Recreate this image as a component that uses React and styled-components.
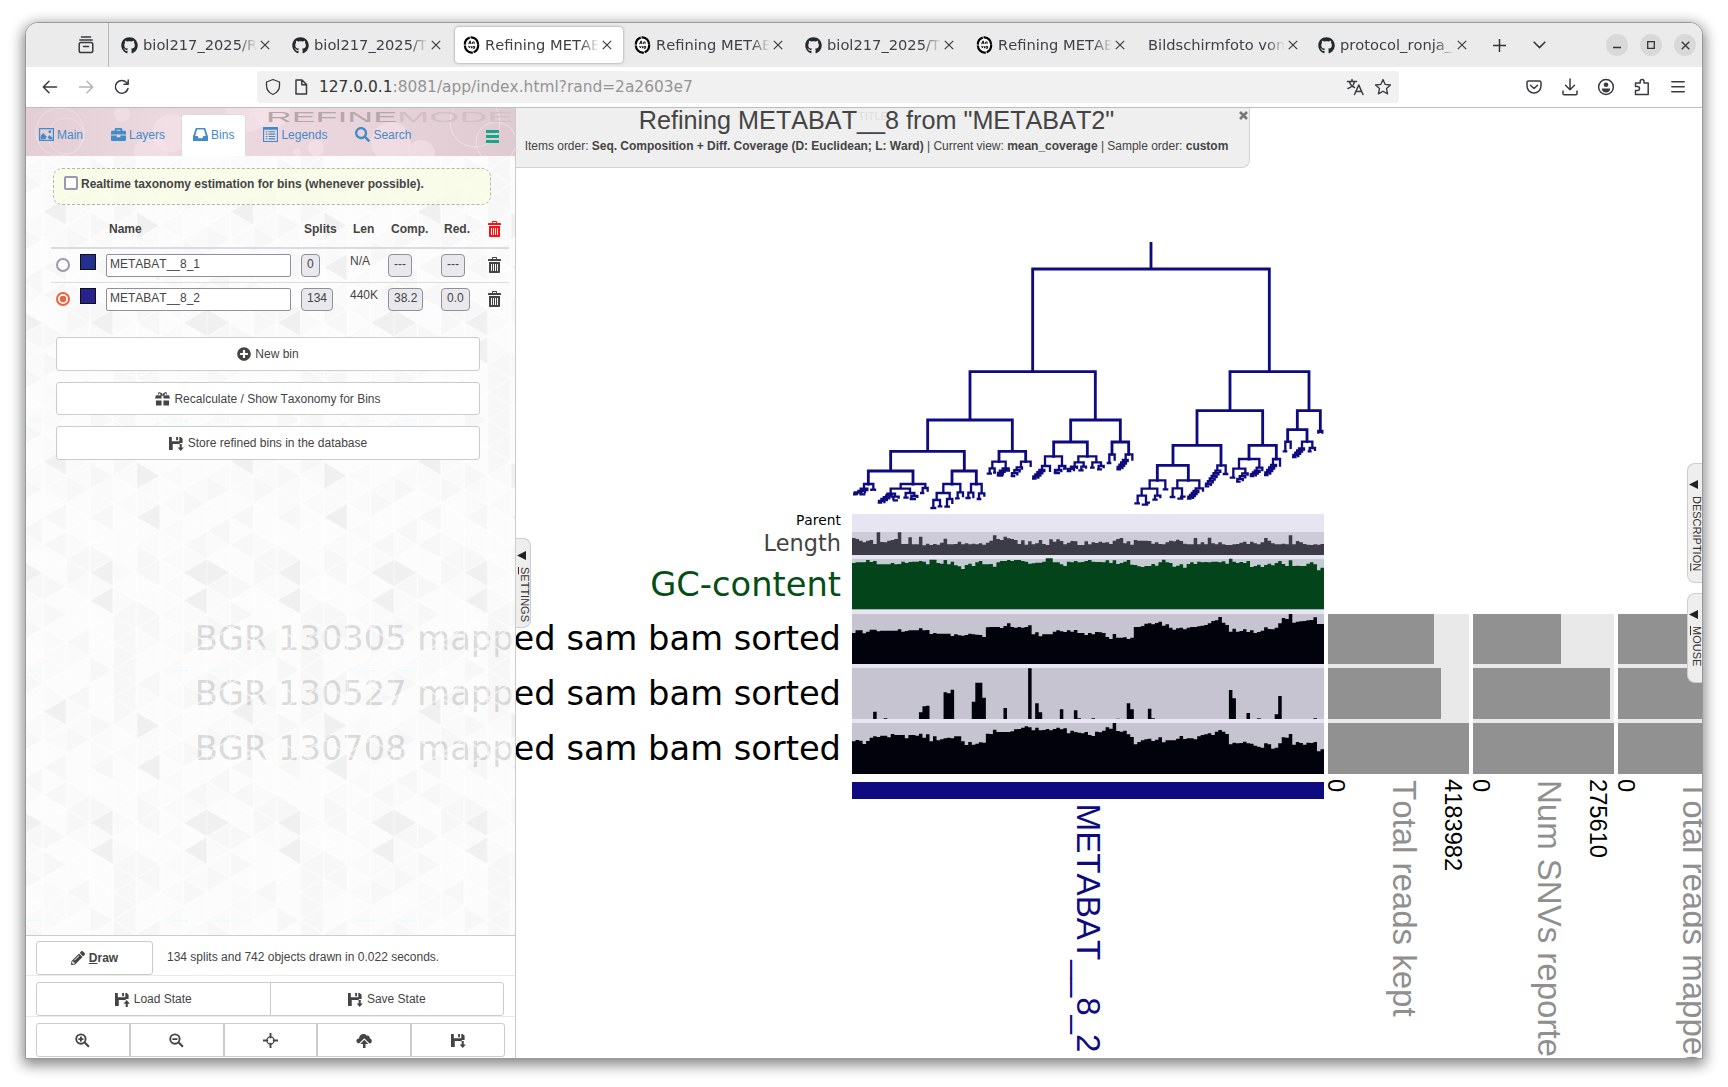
import React from 'react';
import styled, { createGlobalStyle } from 'styled-components';
import { FaGithub, FaPencilAlt, FaSearch, FaBriefcase, FaPlusCircle } from 'react-icons/fa';
import { ImBin } from 'react-icons/im';

const Global = createGlobalStyle`
  html, body { margin: 0; padding: 0; background: #fff; }
  body { font-family: "Liberation Sans", Arial, sans-serif; font-size: 12px; color: #444; overflow: hidden; font-kerning: none; }
  * { box-sizing: border-box; }
  svg { display: block; flex: none; }
`;

const Page = styled.div`
  width: 1728px;
  height: 1087px;
  padding: 22px 25px 28px 25px;
  background: #fff;
`;

const BrowserWindow = styled.div`
  width: 1678px;
  height: 1037px;
  border: 1px solid #9a9a9a;
  border-radius: 13px 13px 0 0;
  overflow: hidden;
  display: flex;
  flex-direction: column;
  background: #fff;
  box-shadow: 0 4px 14px 2px rgba(0, 0, 0, 0.48);
`;

const TabStrip = styled.div`
  height: 44px;
  flex: none;
  background: #ebebeb;
  display: flex;
  align-items: center;
  font-family: "DejaVu Sans", sans-serif;
  font-size: 14.67px;
  color: #3f3f46;
`;

const TabOverview = styled.div`
  width: 83px;
  height: 44px;
  padding-left: 51px;
  display: flex;
  align-items: center;
  border-right: 1px solid #b9b9b9;
  margin-right: 4px;
`;

const TabBox = styled.div`
  width: 168px;
  height: 36px;
  margin-right: 3px;
  padding-left: 8px;
  display: flex;
  align-items: center;
  border-radius: 4px;
  background: ${(p) => (p.$active ? '#fff' : 'transparent')};
  box-shadow: ${(p) => (p.$active ? '0 0 3px rgba(0,0,0,.4)' : 'none')};
`;

const TabLabel = styled.div`
  width: ${(p) => (p.$wide ? 137 : 114)}px;
  margin-left: ${(p) => (p.$wide ? 1 : 5)}px;
  white-space: nowrap;
  overflow: hidden;
  line-height: 20px;
  mask-image: linear-gradient(to right, #000 calc(100% - 18px), transparent 100%);
`;

const StripIcon = styled.div`
  width: ${(p) => p.$w}px;
  display: flex;
  justify-content: center;
`;

const WindowButtons = styled.div`
  display: flex;
  gap: 12px;
  margin-left: auto;
  margin-right: 6px;
`;

const RoundButton = styled.div`
  width: 22px;
  height: 22px;
  border-radius: 50%;
  background: #d9d9d9;
  display: flex;
  align-items: center;
  justify-content: center;
`;

const Toolbar = styled.div`
  height: 41px;
  flex: none;
  display: flex;
  align-items: center;
  background: #fff;
  border-bottom: 1px solid #bdbdbd;
  padding-left: 15px;
`;

const NavButtons = styled.div`
  width: 216px;
  display: flex;
  gap: 18px;
`;

const UrlField = styled.div`
  width: 1142px;
  height: 32px;
  border-radius: 4px;
  background: #f1f1f1;
  display: flex;
  align-items: center;
  padding: 0 7px;
  font-family: "DejaVu Sans", sans-serif;
  font-size: 15.42px;
  color: #949494;
  b { font-weight: normal; color: #333; }
`;

const UrlText = styled.div`
  flex: 1;
  margin-left: 9px;
  white-space: nowrap;
`;

const ToolbarActions = styled.div`
  display: flex;
  gap: 18px;
  margin-left: 126px;
`;

const Content = styled.div`
  position: relative;
  flex: 1;
  min-height: 0;
  display: flex;
  overflow: hidden;
`;

const Canvas = styled.svg`
  position: absolute;
  left: 0;
  top: 0;
`;

const Sidebar = styled.aside`
  position: relative;
  width: 490px;
  height: 950px;
  flex: none;
  display: flex;
  flex-direction: column;
  border-right: 1px solid #ccc;
  background: rgba(255, 255, 255, 0.87);
`;

const Backdrop = styled.svg`
  position: absolute;
  left: 0;
  top: 0;
  z-index: -1;
`;

const Header = styled.div`
  position: relative;
  z-index: 0;
  height: 48px;
  flex: none;
  display: flex;
  align-items: flex-end;
  gap: 4px;
  padding-left: 1px;
  border-bottom: 1px solid #dcd3d7;
`;

const NavItem = styled.div`
  height: 42px;
  margin-bottom: -1px;
  margin-left: ${(p) => p.$shift || 0}px;
  padding: 0 11px 2px;
  border: 1px solid ${(p) => (p.$active ? '#ddd' : 'transparent')};
  border-bottom: 0;
  border-radius: 4px 4px 0 0;
  background: ${(p) => (p.$active ? '#fff' : 'transparent')};
  color: #428bca;
  display: flex;
  align-items: center;
  gap: 3px;
  line-height: 16px;
`;

const MenuBars = styled.div`
  width: 13px;
  margin: 0 16px 12px auto;
  display: grid;
  gap: 2px;
  i { height: 3px; background: #18a689; }
`;

const Panel = styled.div`
  position: relative;
  z-index: 0;
  height: 779px;
  padding: 12px 0 0 25px;
  display: flex;
  flex-direction: column;
`;

const Notice = styled.label`
  margin-left: 2px;
  width: 438px;
  height: 37px;
  border: 1px dashed #b5b5a8;
  border-radius: 9px;
  background: rgba(250, 252, 226, 0.7);
  display: flex;
  padding: 7px 10px;
  gap: 3px;
  font-weight: bold;
  line-height: 16px;
`;

const Check = styled.span`
  width: 14px;
  height: 14px;
  border: 2px solid #9a99ab;
  border-radius: 2px;
  background: #fff;
`;

const Row = styled.div`
  display: grid;
  grid-template-columns: 29px 26px 195px 49px 38px 53px 46px 22px;
  width: 458px;
  height: ${(p) => (p.$head ? 44 : 34)}px;
  padding-top: ${(p) => (p.$head ? 16 : 5)}px;
  border-bottom: ${(p) => (p.$head ? '2px' : p.$last ? '0px' : '1px')} solid #dcdcdc;
  font-weight: ${(p) => (p.$head ? 'bold' : 'normal')};
  align-items: start;
  line-height: 16px;
`;

const HeadCell = styled.div`
  padding-left: 3px;
`;

const Radio = styled.div`
  width: 14px;
  height: 14px;
  margin: 4px 0 0 5px;
  border-radius: 50%;
  border: 2px solid ${(p) => (p.$on ? '#f0623a' : '#9a99ab')};
  background: ${(p) => (p.$on ? 'radial-gradient(circle, #f0623a 0 3px, #fff 3.6px)' : '#fff')};
`;

const Swatch = styled.div`
  width: 16px;
  height: 16px;
  border: 1px solid #111;
  background: ${(p) => p.$color};
`;

const NameInput = styled.div`
  width: 185px;
  height: 23px;
  border: 1px solid #8f8f9d;
  border-radius: 2px;
  background: #fff;
  padding: 1px 3px;
`;

const Pill = styled.div`
  justify-self: start;
  height: 23px;
  border: 1px solid #8f8f9d;
  border-radius: 4px;
  background: #e9e9ed;
  padding: 1px 5px;
`;

const Len = styled.div`
  margin-top: -1px;
`;

const BinIcon = styled.div`
  padding-top: ${(p) => (p.$head ? 0 : 3)}px;
  color: ${(p) => (p.$head ? '#f11' : '#444')};
`;

const Actions = styled.div`
  margin: 20px 0 0 5px;
  width: 424px;
  display: grid;
  gap: 11px;
`;

const Button = styled.div`
  height: ${(p) => p.$h || 34}px;
  width: ${(p) => (p.$w ? p.$w + 'px' : 'auto')};
  border: 1px solid #ccc;
  border-radius: 3px;
  background: #fff;
  display: flex;
  align-items: center;
  justify-content: center;
  gap: 4px;
  color: #444;
`;

const Footer = styled.div`
  position: relative;
  border-top: 1px solid #ccc;
  background: #fff;
  flex: 1;
  display: flex;
  flex-direction: column;
`;

const FootRow = styled.div`
  display: flex;
  height: ${(p) => p.$h}px;
  padding: ${(p) => p.$pt}px 0 0 10px;
  border-bottom: ${(p) => (p.$line ? '1px solid #eaeaea' : '0')};
  flex: none;
  align-items: flex-start;
`;

const Status = styled.div`
  margin: 9px 0 0 14px;
  line-height: 15px;
`;

const Joined = styled.div`
  display: flex;
  width: ${(p) => p.$w}px;
  height: 34px;
  border: 1px solid #ccc;
  border-radius: 3px;
  background: #fff;
`;

const Segment = styled.div`
  flex: 1;
  display: flex;
  align-items: center;
  justify-content: center;
  gap: 4px;
  border-left: ${(p) => p.$bar || 0}px solid #ccc;
  &:first-child { border-left: 0; }
`;

const TitlePanel = styled.div`
  position: relative;
  width: 734px;
  height: 60px;
  border: 1px solid #d3d3d3;
  border-top: 0;
  border-left: 0;
  border-radius: 0 0 8px 0;
  background: #efefef;
  text-align: center;
  padding-right: 12px;
  white-space: nowrap;
`;

const Title = styled.div`
  font-size: 25.2px;
  line-height: 28px;
  margin-top: -2px;
  position: relative;
`;

const SubTitle = styled.div`
  line-height: 16px;
  margin-top: 4px;
  letter-spacing: -0.02px;
`;

const GhostTitle = styled.div`
  position: absolute;
  left: 328px;
  top: 2px;
  font-size: 11px;
  line-height: 12px;
  color: #dedede;
`;

const CloseMark = styled.div`
  position: absolute;
  right: 1px;
  top: 3px;
`;

const SideTab = styled.div`
  position: absolute;
  ${(p) => (p.$left !== undefined ? `left: ${p.$left}px;` : 'right: 0;')}
  top: ${(p) => p.$top}px;
  width: 15px;
  height: ${(p) => p.$h}px;
  border: 1px solid #ccc;
  ${(p) => (p.$left !== undefined ? 'border-left: 0; border-radius: 0 8px 8px 0;' : 'border-right: 0; border-radius: 8px 0 0 8px;')}
  background: #eee;
  writing-mode: vertical-rl;
  color: #333;
  font-size: 11px;
  line-height: 11px;
  padding-top: ${(p) => p.$pad}px;
  white-space: nowrap;
  display: flex;
  align-items: flex-start;
  gap: 7px;
`;

const SideArrow = styled.svg`
  width: 9px;
  height: 9px;
  margin-right: 4px;
`;

/* ---------- icons ---------- */
const Close = ({ s = 10, w = 1.2 }) => (
  <svg width={s} height={s} viewBox="0 0 10 10" stroke="#3c3c40" strokeWidth={w} fill="none"><path d="M.8 .8 9.2 9.2M9.2 .8 .8 9.2" /></svg>
);

const Anvio = () => (
  <svg width="17" height="18" viewBox="0 0 16 18">
    <ellipse cx="8" cy="9" rx="6.700" ry="7.600" fill="#fff" stroke="#000" strokeWidth="2.200" strokeDasharray="9 .8 12 .9" />
    <path d="M5 8.200l1.600-3.400 1 3.200M5.500 7h2M9 7.800V6.200l1.600-.4V8M5 9.900l.9 2 .9-2M8 10.300v2M9.400 10.400h1.800v1.800H9.400z" fill="none" stroke="#000" strokeWidth=".9" />
  </svg>
);

const Line = ({ w = 18, children, sw = 1.5, color = '#3a3a3e' }) => (
  <svg width={w} height={w} viewBox="0 0 18 18" fill="none" stroke={color} strokeWidth={sw} strokeLinecap="round" strokeLinejoin="round">{children}</svg>
);

const Glyph = ({ s = 15, children, color = 'currentColor' }) => (
  <svg width={s} height={s} viewBox="0 0 16 16" fill={color}>{children}</svg>
);

const PictureIcon = () => (
  <Glyph><path fillRule="evenodd" d="M0 1h16v14H0zM1.300 2.300v11.400h13.400V2.300z" /><path d="M1.800 13V9.500L4.500 6.500l3 3 1.800 1.500 1.700-2.500 1.500 1.500 1.800 1V13h-3.500L8.500 10.500 6.500 13z" /><circle cx="11.500" cy="5" r="1.500" /></Glyph>
);
const InboxIcon = () => (
  <Glyph><path fillRule="evenodd" d="M3 1h10l3 9v5H0v-5zM4.300 2.600 2.400 9.600H5l1 2.400h4l1-2.400h2.600L11.700 2.600z" /></Glyph>
);
const ListIcon = () => (
  <Glyph><path fillRule="evenodd" d="M0 0h16v16H0zM1.200 3v11.800h13.600V3z" /><path d="M3 4.500h1.600v1.200H3zM3 7h1.600v1.200H3zM3 9.500h1.600v1.200H3zM3 12h1.600v1.200H3zM6 4.500h7v1.200H6zM6 7h7v1.200H6zM6 9.500h7v1.200H6zM6 12h7v1.200H6z" /></Glyph>
);
const Floppy = ({ up }) => (
  <Glyph>
    <path d="M0 1h3v4.500h8V1h1.500L14.500 3v4.500h-3v1.200L9.500 8.500H4V15H0z" />
    <path d="M7.600 1h2v3.400h-2z" />
    {up ? <path d="M12.500 8.500l3.300 4h-2.200V16h-2.200v-3.500H9.200z" /> : <path d="M11.400 8.500h2.200v3.700h2.200L12.500 16l-3.300-3.800h2.200z" />}
  </Glyph>
);
const GiftIcon = () => (
  <Glyph><path d="M1 4.500h4.500L3 3.500 4 1l3 1 1 2 1-2 3-1 1 2.500-2.500 1H15L16 8H9V5H7v3H0zM1 10h6v5.500H1zM9 10h6v5.500H9z" /><path d="M4.300 2.200 6.600 4.400H3.900zM11.700 2.200 9.400 4.400h2.700z" fill="#fff" /></Glyph>
);
const Lens = ({ plus }) => (
  <Glyph>
    <circle cx="6.300" cy="6.500" r="5" fill="none" stroke="currentColor" strokeWidth="2" />
    <path d="M9.600 10.800l1.500-1.500 4.500 4.600-1.600 1.600zM3.600 5.600h5.400v1.900H3.600z" />
    {plus && <path d="M5.300 3.800h2v5.400h-2z" />}
  </Glyph>
);
const CrossIcon = () => (
  <Glyph><path d="M7 0h2v5.500H7zM7 10.500h2V16H7zM0 7h5.500v2H0zM10.500 7H16v2h-5.500z" /><circle cx="8" cy="8" r="3.800" fill="none" stroke="currentColor" strokeWidth="1.400" /></Glyph>
);
const CloudUp = () => (
  <Glyph s={16}><path d="M3 11.500C-.5 11-.5 6.500 3 6.500 3 2.500 8 .5 10.500 3.500 13 3 14 5 13.800 6.300 16.500 7 16.500 11 13.500 11.500L8.300 6.200z" /><path d="M8.300 7.800l4 4.200H9.500v4H7v-4H4.300z" /></Glyph>
);

/* ---------- dendrogram, in third-of-a-pixel units ---------- */
const FORKS = [
  [578, 1288, 117, 425, 425], [390, 766, 425, 570, 570], [1170, 1407, 425, 542, 542],
  [263, 517, 570, 664, 664], [692, 841, 570, 636, 636], [152, 373, 664, 723, 723],
  [477, 557, 664, 695, 695], [85, 219, 723, 762, 762], [336, 409, 723, 762, 762],
  [641, 742, 636, 679, 679], [816, 866, 636, 673, 673], [1071, 1268, 542, 646, 646],
  [1372, 1441, 542, 599, 605], [999, 1143, 646, 706, 706], [1227, 1309, 646, 687, 687],
  [952, 1045, 706, 751, 751], [1343, 1401, 599, 635, 635],
  [72, 100, 762, 776, 778], [94, 105, 779, 781, 781], [62, 82, 776, 784, 782],
  [182, 256, 762, 775, 772], [248, 263, 774, 786, 783], [152, 210, 776, 790, 788],
  [142, 165, 791, 798, 800], [160, 176, 800, 808, 804], [197, 223, 789, 802, 798], [214, 232, 798, 806, 802],
  [310, 361, 762, 788, 785], [290, 329, 789, 808, 805], [280, 300, 810, 832, 828],
  [321, 337, 807, 826, 820], [353, 369, 787, 803, 800], [393, 425, 762, 787, 787],
  [385, 400, 788, 803, 803], [417, 433, 790, 806, 798],
  [457, 497, 695, 713, 713], [449, 464, 715, 729, 727], [488, 506, 715, 733, 722], [543, 572, 695, 710, 709],
  [615, 666, 679, 708, 706], [606, 630, 708, 720, 724], [657, 676, 708, 722, 716],
  [715, 769, 679, 697, 697], [704, 731, 697, 712, 708], [724, 738, 710, 720, 714],
  [757, 783, 697, 712, 708], [776, 791, 708, 717, 713],
  [808, 824, 673, 697, 690], [857, 877, 673, 688, 690],
  [929, 976, 751, 776, 777], [905, 952, 776, 797, 797], [893, 918, 797, 818, 818],
  [945, 961, 797, 806, 803], [1012, 1078, 751, 775, 773], [998, 1026, 775, 798, 798],
  [1067, 1089, 775, 784, 783], [1132, 1157, 706, 722, 731],
  [1197, 1258, 687, 715, 712], [1180, 1216, 716, 740, 732], [1250, 1267, 713, 724, 722],
  [1299, 1320, 687, 705, 708], [1336, 1352, 635, 662, 655], [1386, 1417, 635, 655, 655],
  [1409, 1425, 654, 664, 661], [1435, 1447, 603, 609, 609],
];
const DASHES = [
  [39, 50, 793], [58, 76, 793], [240, 253, 789], [190, 206, 803], [209, 228, 807], [158, 174, 811],
  [271, 289, 834], [293, 307, 829], [313, 330, 830], [345, 359, 805], [376, 392, 804], [410, 424, 807],
  [440, 456, 731], [459, 468, 728], [473, 490, 737], [494, 510, 722], [643, 660, 729], [669, 680, 716],
  [715, 731, 721], [750, 764, 713], [771, 786, 718], [800, 814, 699],
  [968, 985, 778], [883, 900, 820], [905, 925, 824], [915, 930, 818], [937, 953, 809],
  [989, 1006, 801], [1012, 1030, 806], [1020, 1037, 800], [1148, 1165, 732],
  [1169, 1186, 743], [1328, 1342, 664], [1403, 1415, 664],
];
const STAIRS = [
  [66, 783, 44, 792, 2], [146, 796, 117, 818, 4], [537, 712, 516, 738, 3], [604, 720, 580, 746, 4],
  [702, 710, 684, 723, 2], [854, 690, 833, 718, 4], [1066, 783, 1045, 806, 4], [1132, 722, 1098, 769, 6],
  [1214, 730, 1192, 755, 3], [1250, 722, 1233, 738, 3], [1299, 705, 1276, 735, 4], [1383, 655, 1360, 681, 4],
  [655, 720, 645, 728, 1], [485, 722, 474, 736, 2],
];
/* sizes above this height are drawn with square caps; the fine twigs get flat ones */
const trunkPath = () => FORKS.slice(0, 17).reduce((d, [l, r, y, a, b]) => `${d}M${l} ${a}V${y}H${r}V${b}`, 'M933 40V117');
const twigPath = () => {
  let d = '';
  FORKS.slice(17).forEach(([l, r, y, a, b]) => { d += `M${l} ${a + 2}V${y}H${r}V${b + 2}`; });
  DASHES.forEach(([l, r, y]) => { d += `M${l} ${y}H${r}`; });
  STAIRS.forEach(([x, y, x2, y2, n]) => {
    const dx = (x2 - x) / n;
    const dy = (y2 - y) / n;
    for (let i = 0; i < n; i += 1) {
      const px = x + dx * i;
      const py = y + dy * i;
      d += `M${px + 9} ${py + 7}V${py}H${px + dx}V${py + dy}`;
    }
    d += `M${x2 - 4} ${y2}H${x2 + 10}`;
  });
  return d;
};

/* ---------- layer profiles: tops of the 134 bars ---------- */
const LENGTH = [99,102,107,112,107,105,117,82,111,112,107,105,102,82,117,117,97,118,118,95,121,116,120,117,119,113,101,118,118,117,110,118,115,118,116,118,115,119,113,107,91,102,105,95,100,102,105,117,106,119,109,118,115,105,117,120,103,110,103,108,118,113,108,109,120,120,109,118,112,114,110,113,112,117,107,102,99,115,109,119,105,107,107,107,108,116,112,117,118,112,107,109,104,108,116,118,118,99,118,112,118,98,115,118,112,118,120,120,118,117,113,110,117,110,115,118,112,99,107,115,118,118,116,118,91,118,108,112,117,119,120,118,119,117];
const GC = [174,172,172,172,165,171,168,178,178,178,178,174,178,177,170,174,171,170,170,168,170,178,164,164,174,176,165,178,170,181,184,192,180,176,183,172,168,178,178,177,185,172,168,168,165,168,165,165,168,170,176,175,173,173,170,160,160,172,172,178,183,170,172,168,172,171,168,165,170,171,171,172,166,174,166,177,174,170,165,179,180,184,186,183,183,177,182,172,164,172,174,185,182,178,188,177,172,177,170,172,171,172,170,170,172,169,176,161,170,174,171,174,168,186,183,179,186,180,176,181,174,168,177,183,166,183,182,183,183,176,172,178,196,188];
const COV1 = [384,376,376,385,380,374,374,379,377,377,377,377,377,373,380,378,376,376,376,370,376,375,387,384,386,386,386,386,393,388,391,392,390,386,388,389,390,396,367,366,366,366,369,363,355,366,368,366,368,366,361,388,382,394,388,388,388,380,376,379,381,376,380,375,384,384,390,384,388,381,382,384,396,402,387,398,398,397,402,398,366,366,363,356,355,358,354,350,362,358,368,374,370,368,373,368,366,366,364,362,360,355,348,346,336,353,360,380,371,380,378,373,381,376,384,381,377,367,372,373,368,355,339,342,327,353,350,349,348,346,345,337,357,357];
const SPIKES = { 6: 620, 9: 640, 19: 622, 20: 604, 21: 602, 26: 562, 27: 565, 28: 554, 34: 590, 35: 533, 36: 533, 37: 578, 43: 609, 50: 490, 52: 595, 53: 622, 59: 613, 63: 616, 64: 640, 68: 640, 75: 641, 78: 595, 79: 613, 84: 611, 85: 640, 107: 555, 108: 580, 112: 624, 115: 640, 120: 628, 121: 573, 131: 640 };
const COV2 = Array.from({ length: 134 }, (_, i) => SPIKES[i] || 642);
const COV3 = [709,705,707,717,708,698,694,696,692,692,697,687,690,690,690,700,690,690,692,686,698,688,709,694,706,703,700,698,700,694,694,709,720,711,719,716,712,713,686,687,674,681,681,681,681,679,673,672,668,664,667,676,668,676,675,672,676,672,668,673,670,685,677,681,683,685,681,690,693,680,682,677,667,671,654,678,680,677,688,696,718,711,706,703,701,708,704,697,712,706,706,706,701,693,702,700,700,703,694,690,688,685,690,680,675,680,687,718,713,715,714,710,715,716,722,725,728,715,718,731,728,715,697,698,687,719,711,714,719,713,714,711,739,733];

const profile = (tops, base) => {
  const step = 1416 / 134;
  let d = `M36 ${base}`;
  tops.forEach((y, i) => { d += `V${y}H${(36 + step * (i + 1)).toFixed(1)}`; });
  return `${d}V${base}Z`;
};

const LAYERS = [
  { bg: '#cdcbd7', fill: '#3d3b47', top: 81, base: 150, data: LENGTH },
  { bg: '#c4cbd2', fill: '#03441a', top: 162, base: 313, data: GC },
  { bg: '#c6c4d1', fill: '#02020c', top: 327, base: 477, data: COV1 },
  { bg: '#c6c4d1', fill: '#02020c', top: 489, base: 642, data: COV2 },
  { bg: '#c6c4d1', fill: '#02020c', top: 654, base: 807, data: COV3 },
];

const SAMPLE_COLUMNS = [
  { x: 1328, ends: [106, 113, 141], name: 'Total reads kept', max: '4183982' },
  { x: 1473, ends: [88, 137, 141], name: 'Num SNVs reported', max: '275610' },
  { x: 1618, ends: [141, 141, 141], name: 'Total reads mapped', max: '' },
];
const ROWS = [[614, 50], [668, 51], [723, 51]];

const Turned = ({ x, y, size, fill, children }) => (
  <text transform={`translate(${x} ${y}) rotate(90)`} fontSize={size} fill={fill} fontFamily="Liberation Sans, Arial, sans-serif">{children}</text>
);

const LABELS = [
  ['Parent', 525, 13.8, '#000'],
  ['Length', 550.5, 22.4, '#444'],
  ['GC-content', 595.7, 33.7, '#064f14'],
  ['BGR 130305 mapped sam bam sorted', 650.3, 33.7, '#000'],
  ['BGR 130527 mapped sam bam sorted', 705.3, 33.7, '#000'],
  ['BGR 130708 mapped sam bam sorted', 760, 33.7, '#000'],
];

const Chart = () => (
  <Canvas width="1677" height="950" viewBox="26 108 1677 950">
    <g transform="translate(840 230) scale(.33333)" fill="none" stroke="#0e0a80">
      <path d={trunkPath()} strokeWidth="8.500" strokeLinecap="square" />
      <path d={twigPath()} strokeWidth="7" />
    </g>
    <g transform="translate(840 505) scale(.33333)">
      <rect x="36" y="27" width="1416" height="780" fill="#e7e5f2" />
      {LAYERS.map((l) => (
        <g key={l.top}>
          <rect x="36" y={l.top} width="1416" height={l.base - l.top} fill={l.bg} />
          <path d={profile(l.data, l.base)} fill={l.fill} />
        </g>
      ))}
      <rect x="36" y="831" width="1416" height="51" fill="#0e0a80" />
    </g>
    {LABELS.map(([t, y, s, c]) => (
      <text key={t} x="841" y={y} fontSize={s} fill={c} textAnchor="end" fontFamily="DejaVu Sans, sans-serif">{t}</text>
    ))}
    {SAMPLE_COLUMNS.map((c) => (
      <g key={c.x}>
        <rect x={c.x} y="614" width="141" height="160" fill="#e9e9e9" />
        {ROWS.map(([y, h], i) => <rect key={y} x={c.x} y={y} width={c.ends[i]} height={h} fill="#919191" />)}
        <Turned x={c.x - 0.5} y={779} size={23.7} fill="#000">0</Turned>
        <Turned x={c.x + 64.5} y={780} size={33} fill="#8f8f8f">{c.name}</Turned>
        {c.max && <Turned x={c.x + 117} y={779} size={23.7} fill="#000">{c.max}</Turned>}
      </g>
    ))}
    <Turned x={1076.5} y={803.5} size={33.2} fill="#0e0a80">METABAT__8_2</Turned>
  </Canvas>
);

/* ---------- sidebar texture ---------- */
const CW = 23.4;
const RH = 27.78;
const DARK = { '7,5,l': 1, '0,5,r': 1, '3,5,l': 1, '7,6,l': 1, '3,6,l': 1, '5,3,l': 1, '5,1,r': 1, '1,1,l': 1 };
const tileTriangles = () => {
  const out = [];
  for (let c = 0; c < 8; c += 1) {
    for (let r = -1; r < 10; r += 1) {
      const off = c % 2 ? RH / 2 : 0;
      const y = r * RH + off;
      const x = c * CW;
      const row = (r + 9) % 9;
      const r1 = (c * 37 + row * 53 + c * row * 11) % 7;
      const r2 = (c * 29 + row * 31 + c * row * 17 + 3) % 7;
      const shade = (key, v) => (DARK[key] ? 0.06 : v < 2 ? 0.032 : v < 4 ? 0.02 : 0.01);
      out.push([`M${x} ${y}V${y + RH}L${x + CW} ${y + RH / 2}Z`, shade(`${c},${row},r`, r1)]);
      out.push([`M${x + CW} ${y - RH / 2}V${y + RH / 2}L${x} ${y}Z`, shade(`${c},${row},l`, r2)]);
    }
  }
  return out;
};

const Texture = () => (
  <Backdrop width="489" height="779">
    <defs>
      <pattern id="tri" width="187.200" height="250" patternUnits="userSpaceOnUse" x="-6.300" y="14">
        {tileTriangles().map(([d, a], i) => <path key={i} d={d} fill="#000" fillOpacity={a} stroke="#fff" strokeOpacity=".45" strokeWidth="1.300" />)}
        <path d="M8 1q7-3 14 0M152 1q8-3 16 0" fill="#e4fdfd" stroke="#e4fdfd" strokeWidth="2" />
      </pattern>
    </defs>
    <rect width="489" height="779" fill="url(#tri)" />
  </Backdrop>
);

const Bokeh = () => (
  <Backdrop width="489" height="48">
    <defs>
      <linearGradient id="pink"><stop offset="0" stopColor="#e3ced6" /><stop offset=".3" stopColor="#ecd8df" /><stop offset=".6" stopColor="#ecd6dd" /><stop offset="1" stopColor="#e0cad2" /></linearGradient>
    </defs>
    <rect width="489" height="48" fill="url(#pink)" />
    <g fill="#f8e6ec" fillOpacity=".5">
      <circle cx="145" cy="25" r="19" /><circle cx="125" cy="44" r="17" /><circle cx="96" cy="6" r="8" /><circle cx="222" cy="2" r="22" /><circle cx="246" cy="3" r="18" />
      <circle cx="290" cy="40" r="8" /><circle cx="365" cy="34" r="20" /><circle cx="395" cy="46" r="14" /><circle cx="271" cy="44" r="4" />
    </g>
    <g fill="none" stroke="#f0dee4"><circle cx="34" cy="24" r="24" /><circle cx="40" cy="28" r="18" /><circle cx="449" cy="14" r="25" /><circle cx="470" cy="34" r="20" /></g>
    <g fontSize="15.500" fontFamily="Liberation Sans, Arial, sans-serif">
      <text x="240" y="14" textLength="131" lengthAdjust="spacingAndGlyphs" fill="#b3a7ab">REFINE</text>
      <text x="371" y="14" textLength="116" lengthAdjust="spacingAndGlyphs" fill="#cfc1c6">MODE</text>
    </g>
  </Backdrop>
);

const TABS = [
  ['gh', 'biol217_2025/README'], ['gh', 'biol217_2025/Tutorial'], ['an', 'Refining METABAT', true], ['an', 'Refining METABAT'],
  ['gh', 'biol217_2025/Tutorial'], ['an', 'Refining METABAT'], [null, 'Bildschirmfoto von 2025'], ['gh', 'protocol_ronja_git'],
];
const BINS = [
  { name: 'METABAT__8_1', splits: '0', len: 'N/A', comp: '---', red: '---', color: '#22308f' },
  { name: 'METABAT__8_2', splits: '134', len: '440K', comp: '38.2', red: '0.0', color: '#28228f', on: true },
];

const Triangle = () => (
  <SideArrow viewBox="0 0 9 9"><path d="M0 4.500 9 0V9z" fill="#222" /></SideArrow>
);

export default function App() {
  return (
    <Page>
      <Global />
      <BrowserWindow>
        <TabStrip>
          <TabOverview>
            <Line w={18} sw={1.5}><path d="M4.500 1h9M2.800 4h12.400" /><rect x="2.200" y="6.600" width="13.600" height="10" rx="1.800" /><path d="M6.500 10.600h5" /></Line>
          </TabOverview>
          {TABS.map(([icon, label, active], i) => (
            <TabBox key={i} $active={active}>
              {icon === 'gh' && <FaGithub size={17} color="#24292f" />}
              {icon === 'an' && <Anvio />}
              <TabLabel $wide={!icon}>{label}</TabLabel>
              <StripIcon $w={15}><Close /></StripIcon>
            </TabBox>
          ))}
          <StripIcon $w={37}><svg width="13" height="13" viewBox="0 0 13 13" stroke="#333" strokeWidth="1.500"><path d="M6.500 0v13M0 6.500h13" /></svg></StripIcon>
          <StripIcon $w={43}><svg width="13" height="8" viewBox="0 0 13 8" stroke="#333" strokeWidth="1.500" fill="none"><path d="M.7 .8l5.800 5.800L12.300 .8" /></svg></StripIcon>
          <WindowButtons>
            <RoundButton><svg width="8" height="8"><path d="M0 6.500h8" stroke="#333" strokeWidth="1.300" /></svg></RoundButton>
            <RoundButton><svg width="8" height="8"><path d="M.7 .7h6.600v6.600H.7z" fill="none" stroke="#333" strokeWidth="1.300" /></svg></RoundButton>
            <RoundButton><Close s={9} w={1.6} /></RoundButton>
          </WindowButtons>
        </TabStrip>
        <Toolbar>
          <NavButtons>
            <Line><path d="M15.500 9H2.500M8 3.300 2.300 9 8 14.700" /></Line>
            <Line color="#b4b4b4"><path d="M2.500 9h13M10 3.300 15.700 9 10 14.700" /></Line>
            <Line><path d="M15 10.500A6.400 6.400 0 1 1 13.500 4.500L15 6M15.200 2v4.300H11" /></Line>
          </NavButtons>
          <UrlField>
            <Line><path d="M9 1.500 15.500 4v3.500c0 4-2.300 7.200-6.500 9-4.200-1.800-6.500-5-6.500-9V4z" strokeWidth="1.300" /></Line>
            <div style={{ width: 10 }} />
            <Line><path d="M4 2h6l4.500 4.500V16H4zM9.800 2v4.700h4.700" /></Line>
            <UrlText><b>127.0.0.1</b>:8081/app/index.html?rand=2a2603e7</UrlText>
            <Line><path d="M1.500 3.500h9M6 1.500v2M8.500 3.500C8 7 5 9.500 2 10.500M3.500 4C4.500 7 7 9 8.500 9.500M8.500 16.500 12.800 7l4.200 9.500M10 13.500h5.600" /></Line>
            <div style={{ width: 10 }} />
            <Line><path d="M9 1.500l2.200 4.900 5.300.6-4 3.600 1.100 5.300L9 13.200l-4.600 2.700 1.100-5.300-4-3.600 5.300-.6z" strokeWidth="1.300" /></Line>
          </UrlField>
          <ToolbarActions>
            <Line><path d="M3.500 3h11a1.500 1.500 0 0 1 1.500 1.500V8a7 7 0 0 1-14 0V4.500A1.500 1.500 0 0 1 3.500 3zM5.500 7.200 9 10.500l3.500-3.300" /></Line>
            <Line><path d="M9 1v10.500M4.500 7.300 9 11.700l4.500-4.400M2 13v2.700c0 .6.4 1 1 1h12c.6 0 1-.4 1-1V13" /></Line>
            <Line><circle cx="9" cy="9" r="7.400" /><circle cx="9" cy="6.800" r="2.300" fill="#3a3a3e" stroke="none" /><path d="M4.800 10.500h8.400c0 2.500-2 4-4.200 4s-4.200-1.500-4.200-4z" fill="#3a3a3e" stroke="none" /></Line>
            <Line><path d="M2.500 16.500h12.700V5H11V3.300a1.900 1.900 0 0 0-3.800 0V5H2.500v3.500h2a1.900 1.900 0 0 1 0 4h-2z" /></Line>
            <Line><path d="M2.800 3.700h12.400M2.800 8.700h12.400M2.800 13.700h12.400" /></Line>
          </ToolbarActions>
        </Toolbar>
        <Content>
          <Chart />
          <Sidebar>
            <Header>
              <Bokeh />
              <NavItem><PictureIcon />Main</NavItem>
              <NavItem><FaBriefcase size={15} />Layers</NavItem>
              <NavItem $active><InboxIcon />Bins</NavItem>
              <NavItem $shift={1}><ListIcon />Legends</NavItem>
              <NavItem><FaSearch size={15} />Search</NavItem>
              <MenuBars><i /><i /><i /></MenuBars>
            </Header>
            <Panel>
              <Texture />
              <Notice><Check />Realtime taxonomy estimation for bins (whenever possible).</Notice>
              <Row $head>
                <span /><span />
                <HeadCell>Name</HeadCell><HeadCell>Splits</HeadCell><HeadCell>Len</HeadCell><HeadCell>Comp.</HeadCell><HeadCell>Red.</HeadCell>
                <BinIcon $head><ImBin size={16} /></BinIcon>
              </Row>
              {BINS.map((b, i) => (
                <Row key={b.name} $last={i === 1}>
                  <Radio $on={b.on} />
                  <Swatch $color={b.color} />
                  <NameInput>{b.name}</NameInput>
                  <Pill>{b.splits}</Pill>
                  <Len>{b.len}</Len>
                  <Pill>{b.comp}</Pill>
                  <Pill>{b.red}</Pill>
                  <BinIcon><ImBin size={16} /></BinIcon>
                </Row>
              ))}
              <Actions>
                <Button><FaPlusCircle size={14} />New bin</Button>
                <Button $h={33}><GiftIcon />Recalculate / Show Taxonomy for Bins</Button>
                <Button><Floppy />Store refined bins in the database</Button>
              </Actions>
            </Panel>
            <Footer>
              <FootRow $h={40} $pt={5} $line>
                <Button $w={117}><FaPencilAlt size={14} /><b><u>D</u>raw</b></Button>
                <Status>134 splits and 742 objects drawn in 0.022 seconds.</Status>
              </FootRow>
              <FootRow $h={41} $pt={6} $line>
                <Joined $w={468}>
                  <Segment><Floppy up />Load State</Segment>
                  <Segment $bar={1}><Floppy />Save State</Segment>
                </Joined>
              </FootRow>
              <FootRow $h={41} $pt={6}>
                <Joined $w={469}>
                  <Segment><Lens plus /></Segment>
                  <Segment $bar={2}><Lens /></Segment>
                  <Segment $bar={2}><CrossIcon /></Segment>
                  <Segment $bar={2}><CloudUp /></Segment>
                  <Segment $bar={2}><Floppy /></Segment>
                </Joined>
              </FootRow>
            </Footer>
          </Sidebar>
          <TitlePanel>
            <GhostTitle>▼ TITLE</GhostTitle>
            <Title>Refining METABAT__8 from "METABAT2"</Title>
            <SubTitle>Items order: <b>Seq. Composition + Diff. Coverage (D: Euclidean; L: Ward)</b> | Current view: <b>mean_coverage</b> | Sample order: <b>custom</b></SubTitle>
            <CloseMark><svg width="9" height="9" viewBox="0 0 9 9"><path d="M1 1l7 7M8 1 1 8" stroke="#777" strokeWidth="2.600" /></svg></CloseMark>
          </TitlePanel>
          <SideTab $left={490} $top={430} $h={90} $pad={12}><Triangle /><span><u>S</u>ETTINGS</span></SideTab>
          <SideTab $top={355} $h={120} $pad={16}><Triangle /><span>DESCRIPTIO<u>N</u></span></SideTab>
          <SideTab $top={485} $h={90} $pad={16}><Triangle /><span><u>M</u>OUSE</span></SideTab>
        </Content>
      </BrowserWindow>
    </Page>
  );
}
